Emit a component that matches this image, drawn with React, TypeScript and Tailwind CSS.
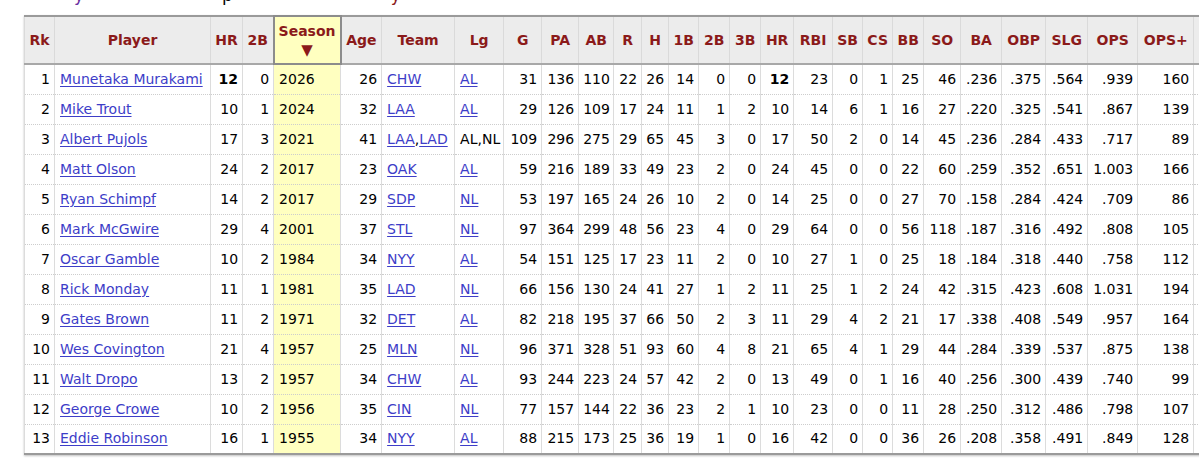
import React from 'react';

type Row = (string | number)[];

// Rk, Player, HR, 2B, Season, Age, Team, Lg, G, PA, AB, R, H, 1B, 2B, 3B, HR, RBI, SB, CS, BB, SO, BA, OBP, SLG, OPS, OPS+
const rows: Row[] = [
  [1, 'Munetaka Murakami', 12, 0, 2026, 26, 'CHW', 'AL', 31, 136, 110, 22, 26, 14, 0, 0, 12, 23, 0, 1, 25, 46, '.236', '.375', '.564', '.939', 160],
  [2, 'Mike Trout', 10, 1, 2024, 32, 'LAA', 'AL', 29, 126, 109, 17, 24, 11, 1, 2, 10, 14, 6, 1, 16, 27, '.220', '.325', '.541', '.867', 139],
  [3, 'Albert Pujols', 17, 3, 2021, 41, 'LAA,LAD', 'AL,NL', 109, 296, 275, 29, 65, 45, 3, 0, 17, 50, 2, 0, 14, 45, '.236', '.284', '.433', '.717', 89],
  [4, 'Matt Olson', 24, 2, 2017, 23, 'OAK', 'AL', 59, 216, 189, 33, 49, 23, 2, 0, 24, 45, 0, 0, 22, 60, '.259', '.352', '.651', '1.003', 166],
  [5, 'Ryan Schimpf', 14, 2, 2017, 29, 'SDP', 'NL', 53, 197, 165, 24, 26, 10, 2, 0, 14, 25, 0, 0, 27, 70, '.158', '.284', '.424', '.709', 86],
  [6, 'Mark McGwire', 29, 4, 2001, 37, 'STL', 'NL', 97, 364, 299, 48, 56, 23, 4, 0, 29, 64, 0, 0, 56, 118, '.187', '.316', '.492', '.808', 105],
  [7, 'Oscar Gamble', 10, 2, 1984, 34, 'NYY', 'AL', 54, 151, 125, 17, 23, 11, 2, 0, 10, 27, 1, 0, 25, 18, '.184', '.318', '.440', '.758', 112],
  [8, 'Rick Monday', 11, 1, 1981, 35, 'LAD', 'NL', 66, 156, 130, 24, 41, 27, 1, 2, 11, 25, 1, 2, 24, 42, '.315', '.423', '.608', '1.031', 194],
  [9, 'Gates Brown', 11, 2, 1971, 32, 'DET', 'AL', 82, 218, 195, 37, 66, 50, 2, 3, 11, 29, 4, 2, 21, 17, '.338', '.408', '.549', '.957', 164],
  [10, 'Wes Covington', 21, 4, 1957, 25, 'MLN', 'NL', 96, 371, 328, 51, 93, 60, 4, 8, 21, 65, 4, 1, 29, 44, '.284', '.339', '.537', '.875', 138],
  [11, 'Walt Dropo', 13, 2, 1957, 34, 'CHW', 'AL', 93, 244, 223, 24, 57, 42, 2, 0, 13, 49, 0, 1, 16, 40, '.256', '.300', '.439', '.740', 99],
  [12, 'George Crowe', 10, 2, 1956, 35, 'CIN', 'NL', 77, 157, 144, 22, 36, 23, 2, 1, 10, 23, 0, 0, 11, 28, '.250', '.312', '.486', '.798', 107],
  [13, 'Eddie Robinson', 16, 1, 1955, 34, 'NYY', 'AL', 88, 215, 173, 25, 36, 19, 1, 0, 16, 42, 0, 0, 36, 26, '.208', '.358', '.491', '.849', 128],
];

const headers: { label: string; w: string }[] = [
  { label: 'Rk', w: 'w-[30px]' },
  { label: 'Player', w: 'w-[156px]' },
  { label: 'HR', w: 'w-[32px]' },
  { label: '2B', w: 'w-[31px]' },
  { label: 'Season', w: 'w-[67px]' },
  { label: 'Age', w: 'w-[41px]' },
  { label: 'Team', w: 'w-[73px]' },
  { label: 'Lg', w: 'w-[49px]' },
  { label: 'G', w: 'w-[38px]' },
  { label: 'PA', w: 'w-[37px]' },
  { label: 'AB', w: 'w-[35px]' },
  { label: 'R', w: 'w-[28px]' },
  { label: 'H', w: 'w-[27px]' },
  { label: '1B', w: 'w-[30px]' },
  { label: '2B', w: 'w-[31px]' },
  { label: '3B', w: 'w-[31px]' },
  { label: 'HR', w: 'w-[33px]' },
  { label: 'RBI', w: 'w-[39px]' },
  { label: 'SB', w: 'w-[30px]' },
  { label: 'CS', w: 'w-[30px]' },
  { label: 'BB', w: 'w-[31px]' },
  { label: 'SO', w: 'w-[37px]' },
  { label: 'BA', w: 'w-[41px]' },
  { label: 'OBP', w: 'w-[44px]' },
  { label: 'SLG', w: 'w-[42px]' },
  { label: 'OPS', w: 'w-[50px]' },
  { label: 'OPS+', w: 'w-[56px]' },
];

const link = 'text-[#3d3dc8] underline underline-offset-2';

function Cell({ value, col, bold }: { value: string | number; col: number; bold: boolean }) {
  const base = 'h-[30px] border-x border-[#dcdcdc] px-[4px] whitespace-nowrap';
  if (col === 1) {
    return (
      <td className={`${base} text-left pl-[5px]`}>
        <a className={link}>{value}</a>
      </td>
    );
  }
  if (col === 4) {
    return <td className={`${base} text-left pl-[5px] bg-[#ffffc0]`}>{value}</td>;
  }
  if (col === 6) {
    const parts = String(value).split(',');
    return (
      <td className={`${base} text-left pl-[5px]`}>
        {parts.map((p, i) => (
          <span key={p}>
            {i > 0 ? ',' : null}
            <a className={link}>{p}</a>
          </span>
        ))}
      </td>
    );
  }
  if (col === 7) {
    const multi = String(value).includes(',');
    return (
      <td className={`${base} text-left pl-[5px]`}>
        {multi ? value : <a className={link}>{value}</a>}
      </td>
    );
  }
  return <td className={`${base} text-right ${bold ? 'font-bold' : ''}`}>{value}</td>;
}

export default function App() {
  return (
    <div
      className="w-[1199px] h-[468px] overflow-hidden bg-white text-[14px] text-black"
      style={{ fontFamily: 'Verdana, "DejaVu Sans", sans-serif' }}
    >
      {/* caption line, scrolled mostly out of view */}
      <div className="h-[15px] overflow-hidden">
        <div className="-mt-[14px] flex h-[18px] text-[17px] leading-[18px]">
          <span className="ml-[74px] text-[#6b2fa0]">y</span>
          <span className="ml-[138px] text-black">p</span>
          <span className="ml-[158px] text-[#8b1a1a]">y</span>
        </div>
      </div>

      <div className="pl-[24px]">
        <table className="table-fixed border-collapse w-[1210px] border-y-2 border-l border-[#9a9a9a] shadow-[0_1px_2px_rgba(0,0,0,0.25)]">
          <thead>
            <tr className="bg-[#ececec] h-[48px] border-b-2 border-[#a8a8a8]">
              {headers.map((h, i) =>
                i === 4 ? (
                  <th
                    key={i}
                    className={`${h.w} bg-[#ffffc0] border-2 border-[#8c8c8c] px-[3px] font-bold text-[#8b1a1a] leading-[19px] align-middle`}
                  >
                    Season
                    <div className="text-[15px] leading-[18px]">▼</div>
                  </th>
                ) : (
                  <th
                    key={i}
                    className={`${h.w} border-x border-[#dadada] px-[2px] font-bold text-[#8b1a1a] whitespace-nowrap`}
                  >
                    {h.label}
                  </th>
                )
              )}
              <th className="w-[40px] border-l border-[#cfcfcf]" />
            </tr>
          </thead>
          <tbody>
            {rows.map((r, ri) => (
              <tr key={ri} className="bg-white [&>td]:border-b [&>td]:border-b-[#cdcdcd] [&>td]:[border-bottom-style:dotted]">
                {r.map((v, ci) => (
                  <Cell key={ci} value={v} col={ci} bold={ri === 0 && (ci === 2 || ci === 16)} />
                ))}
                <td className="border-l border-[#dcdcdc]" />
              </tr>
            ))}
          </tbody>
        </table>
      </div>
    </div>
  );
}
